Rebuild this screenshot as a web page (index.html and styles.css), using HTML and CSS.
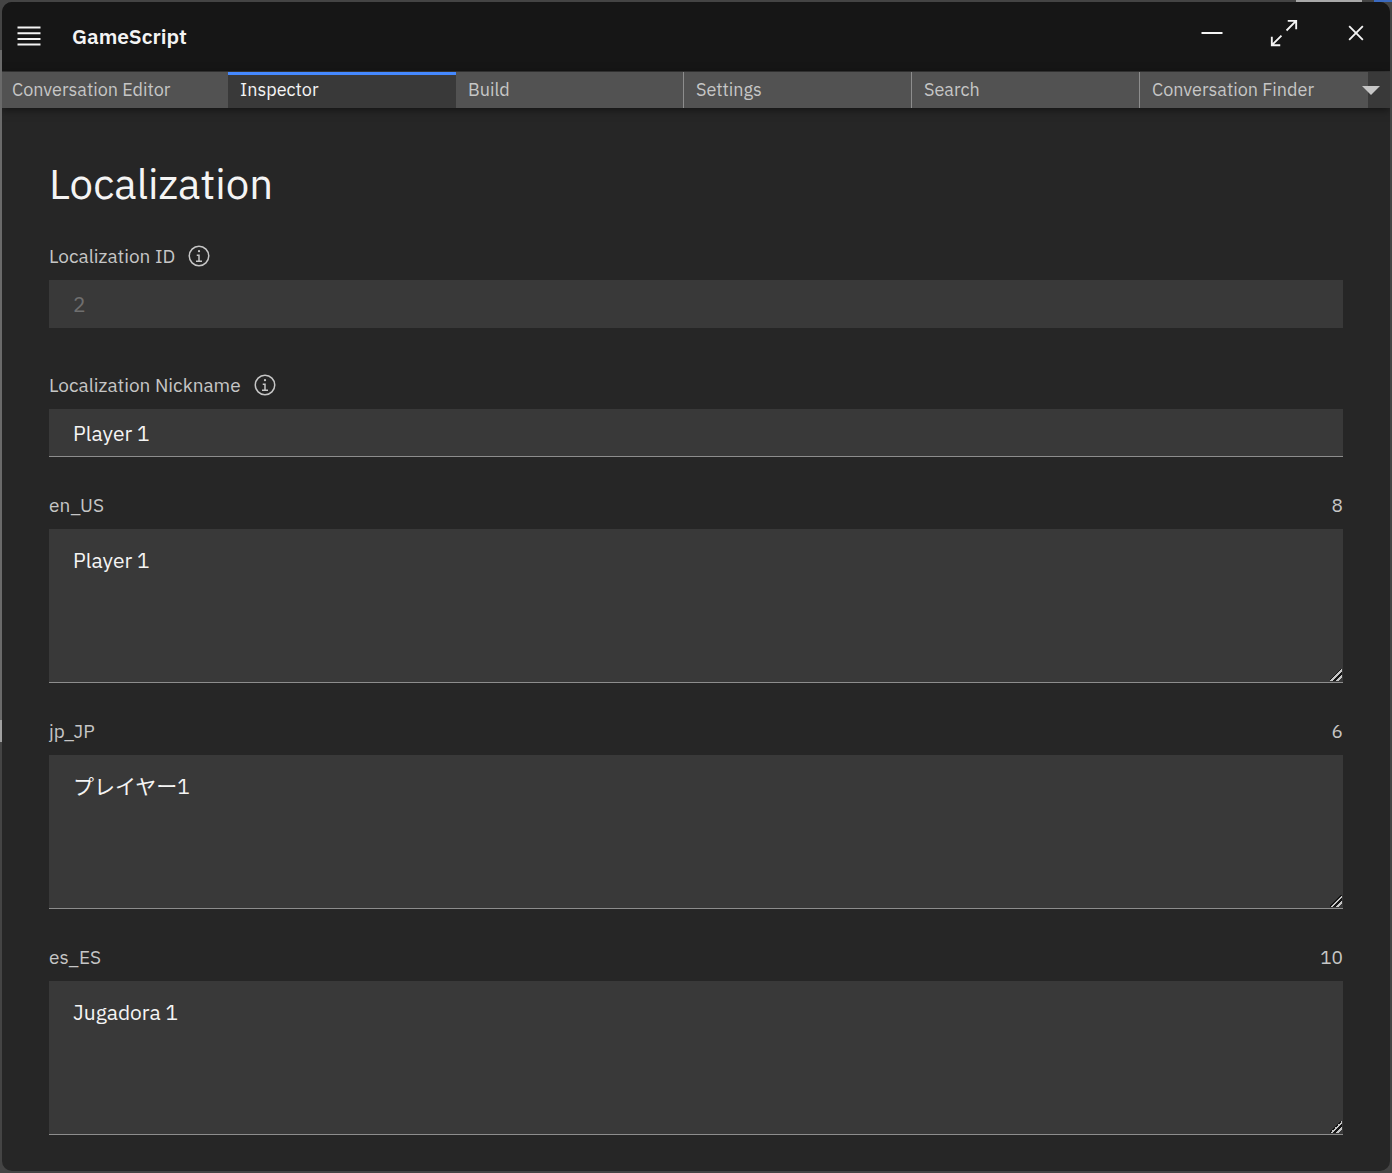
FILE: index.html
```html
<!DOCTYPE html>
<html lang="en">
<head>
<meta charset="utf-8">
<title>GameScript</title>
<link rel="stylesheet" href="styles.css">
</head>
<body>
<div class="window">
  <header class="titlebar">
    <button class="icon-button" type="button" aria-label="Menu">
      <svg class="icon" viewBox="0 0 30 30"><path d="M3.5 5.5h23v2h-23zM3.5 11.2h23v2h-23zM3.5 17h23v2h-23zM3.5 22.5h23v2h-23z"/></svg>
    </button>
    <span class="app-name">GameScript</span>
    <div class="window-controls">
      <button class="icon-button" type="button" aria-label="Minimize">
        <svg class="icon" viewBox="0 0 30 30"><path d="M4.5 14h21v2h-21z"/></svg>
      </button>
      <button class="icon-button" type="button" aria-label="Maximize">
        <svg class="icon" viewBox="0 0 32 32"><path d="M20 2v2h6.586L18 12.582 19.414 14 28 5.414V12h2V2zM14 19.416 12.592 18 4 26.586V20H2v10h10v-2H5.414z"/></svg>
      </button>
      <button class="icon-button" type="button" aria-label="Close">
        <svg class="icon" viewBox="0 0 32 32"><path d="M24 9.4 22.6 8 16 14.6 9.4 8 8 9.4l6.6 6.6L8 22.6 9.4 24l6.6-6.6 6.6 6.6 1.4-1.4-6.6-6.6z"/></svg>
      </button>
    </div>
  </header>
  <nav class="tabbar">
    <div class="tabs" role="tablist">
      <button class="tab" type="button" role="tab">Conversation Editor</button>
      <button class="tab tab-active" type="button" role="tab" aria-selected="true">Inspector</button>
      <button class="tab" type="button" role="tab">Build</button>
      <button class="tab" type="button" role="tab">Settings</button>
      <button class="tab" type="button" role="tab">Search</button>
      <button class="tab" type="button" role="tab">Conversation Finder</button>
    </div>
    <button class="tab-overflow" type="button" aria-label="More tabs">
      <svg class="caret" viewBox="0 0 18 9"><path d="M0 0h18L9 9z"/></svg>
    </button>
  </nav>
  <main class="content">
    <h1 class="title">Localization</h1>
    <form class="fields">
      <div class="field field-readonly">
        <div class="field-head">
          <label class="label" for="loc-id">Localization ID</label>
          <button class="info" type="button" aria-label="About the ID">
            <svg class="info-icon" viewBox="0 0 32 32"><path d="M17 22v-8h-4v2h2v6h-3v2h8v-2zM16 8a1.5 1.5 0 1 0 1.5 1.5A1.5 1.5 0 0 0 16 8z"/><path d="M16 30a14 14 0 1 1 14-14 14 14 0 0 1-14 14zm0-26a12 12 0 1 0 12 12A12 12 0 0 0 16 4z"/></svg>
          </button>
        </div>
        <input class="input" id="loc-id" type="text" value="2" disabled>
      </div>
      <div class="field">
        <div class="field-head">
          <label class="label" for="loc-name">Localization Nickname</label>
          <button class="info" type="button" aria-label="About the nickname">
            <svg class="info-icon" viewBox="0 0 32 32"><path d="M17 22v-8h-4v2h2v6h-3v2h8v-2zM16 8a1.5 1.5 0 1 0 1.5 1.5A1.5 1.5 0 0 0 16 8z"/><path d="M16 30a14 14 0 1 1 14-14 14 14 0 0 1-14 14zm0-26a12 12 0 1 0 12 12A12 12 0 0 0 16 4z"/></svg>
          </button>
        </div>
        <input class="input" id="loc-name" type="text" value="Player 1">
      </div>
      <div class="field">
        <div class="field-head">
          <label class="label" for="text-en">en_US</label>
          <span class="count">8</span>
        </div>
        <textarea class="input area" id="text-en">Player 1</textarea>
      </div>
      <div class="field">
        <div class="field-head">
          <label class="label" for="text-jp">jp_JP</label>
          <span class="count">6</span>
        </div>
        <textarea class="input area" id="text-jp" lang="ja">プレイヤー1</textarea>
      </div>
      <div class="field">
        <div class="field-head">
          <label class="label" for="text-es">es_ES</label>
          <span class="count">10</span>
        </div>
        <textarea class="input area" id="text-es">Jugadora 1</textarea>
      </div>
    </form>
  </main>
</div>
</body>
</html>
```
FILE: styles.css
```css
* {
  box-sizing: border-box;
}

body {
  margin: 0;
  padding: 2px;
  min-height: 100vh;
  display: flex;
  /* slivers of the desktop behind the window */
  background:
    linear-gradient(90deg, #3b6ac0, #3b6ac0) top right / 18px 2px no-repeat,
    linear-gradient(90deg, #a8a8a8, #a8a8a8) top right 30px / 66px 2px no-repeat,
    linear-gradient(#444 50px, #6a6a6a 50px, #6a6a6a 720px, #a0a0a0 720px, #a0a0a0 742px, #444 742px) top left / 2px 100% no-repeat,
    #444;
  color: #f4f4f4;
  font-family: "IBM Plex Sans", "Noto Sans", "Noto Sans CJK JP", sans-serif;
}

button {
  border: 0;
  padding: 0;
  background: none;
  color: inherit;
  font: inherit;
}

svg {
  display: block;
  fill: currentColor;
}

.window {
  flex: 1;
  min-width: 0;
  display: flex;
  flex-direction: column;
  overflow: hidden;
  border-radius: 10px;
  background: #262626;
}

.titlebar {
  display: flex;
  align-items: center;
  height: 70px;
  padding: 0 19px 2px 12px;
  border-bottom: 1px solid #393939;
  background: #161616;
}

.icon {
  width: 30px;
  height: 30px;
}

.app-name {
  margin-left: 28px;
  font-size: 21px;
  font-weight: 600;
  line-height: 30px;
}

.window-controls {
  display: flex;
  gap: 42px;
  margin-left: auto;
  padding-bottom: 6px;
}

.tabbar {
  display: flex;
  height: 36px;
  background: #393939;
  box-shadow: 0 2px 8px rgba(0, 0, 0, 0.5);
}

.tabs {
  flex: 1;
  display: grid;
  grid-template-columns: repeat(6, 1fr);
  margin-left: -2px;
}

.tab {
  padding: 0 12px;
  overflow: hidden;
  border-right: 1px solid #8d8d8d;
  background: #525252;
  color: #c6c6c6;
  font-size: 18px;
  line-height: 24px;
  text-align: left;
  white-space: nowrap;
}

.tab:first-child,
.tab:last-child,
.tab-active {
  border-right: 0;
}

.tab-active {
  background: #393939;
  box-shadow: inset 0 3px #4589ff;
  color: #f4f4f4;
}

.tab-overflow {
  display: flex;
  align-items: center;
  justify-content: center;
  width: 22px;
  color: #c6c6c6;
}

.caret {
  flex: none;
  width: 18px;
  height: 9px;
  margin-right: 16px;
}

.content {
  padding: 52px 47px 36px;
}

.title {
  margin: 0 0 36px;
  font-size: 42px;
  font-weight: 400;
  line-height: 48px;
}

.fields {
  display: flex;
  flex-direction: column;
  gap: 36px;
}

.field {
  display: flex;
  flex-direction: column;
  gap: 12px;
}

.field-readonly {
  padding-bottom: 9px;
}

.field-head {
  display: flex;
  align-items: center;
  gap: 12px;
  height: 24px;
  color: #c6c6c6;
  font-size: 19px;
  line-height: 24px;
}

.info-icon {
  width: 24px;
  height: 24px;
}

.count {
  margin-left: auto;
}

.input {
  display: block;
  width: 100%;
  height: 48px;
  margin: 0;
  padding: 0 24px;
  border: 0;
  border-bottom: 1px solid #8d8d8d;
  border-radius: 0;
  outline: 0;
  background: #393939;
  color: #f4f4f4;
  font-family: inherit;
  font-size: 21px;
  line-height: 30px;
}

.input:disabled {
  border-bottom-color: transparent;
  color: #6f6f6f;
}

.area {
  height: 154px;
  padding: 16px 24px;
  resize: vertical;
}

.area::-webkit-resizer {
  background: linear-gradient(135deg, transparent 42%, #161616 42%, #161616 50%, #c6c6c6 50%, #c6c6c6 61%, #161616 61%, #161616 73%, #c6c6c6 73%, #c6c6c6 84%, transparent 84%) right 1px bottom 1px / 12px 12px no-repeat;
}
```
